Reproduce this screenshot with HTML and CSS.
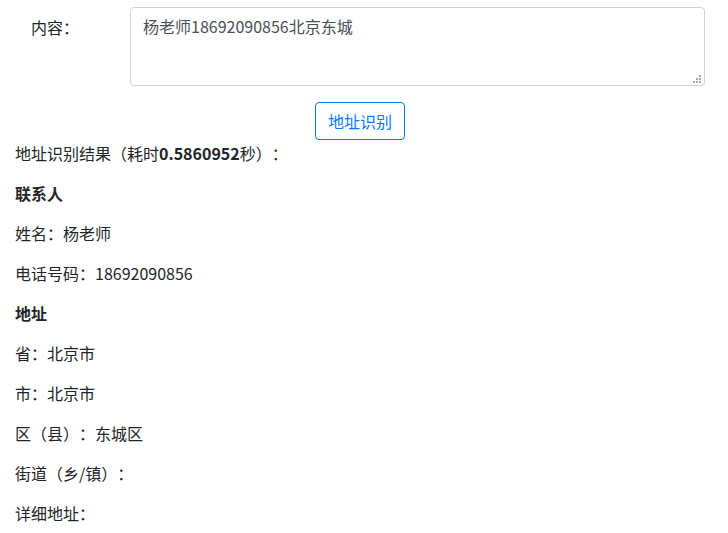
FILE: index.html
```html
<!DOCTYPE html>
<html lang="zh-CN">
<head>
<meta charset="utf-8">
<title>地址识别</title>
<link rel="stylesheet" href="styles.css">
</head>
<body>
<div class="page">
  <div class="form-row">
    <label class="label" for="content">内容：</label>
    <div class="field">
      <textarea id="content" class="input">杨老师18692090856北京东城</textarea>
      <svg class="grip" width="8" height="8" viewBox="0 0 8 8" aria-hidden="true">
        <rect x="6" y="0" width="2" height="2"/>
        <rect x="3" y="3" width="2" height="2"/>
        <rect x="6" y="3" width="2" height="2"/>
        <rect x="0" y="6" width="2" height="2"/>
        <rect x="3" y="6" width="2" height="2"/>
        <rect x="6" y="6" width="2" height="2"/>
      </svg>
    </div>
  </div>
  <div class="actions">
    <button class="btn" type="button">地址识别</button>
  </div>
  <div class="result">
    <p>地址识别结果（耗时<b>0.5860952</b>秒）：</p>
    <p><b>联系人</b></p>
    <p>姓名：杨老师</p>
    <p>电话号码：18692090856</p>
    <p><b>地址</b></p>
    <p>省：北京市</p>
    <p>市：北京市</p>
    <p>区（县）：东城区</p>
    <p>街道（乡/镇）：</p>
    <p>详细地址：</p>
  </div>
</div>
</body>
</html>
```
FILE: styles.css
```css
* { box-sizing: border-box; }
html, body { margin: 0; padding: 0; background: #fff; }
body {
  font-family: "Noto Sans CJK SC", "Noto Sans", sans-serif;
  font-size: 16px;
  line-height: 1.5;
  color: #212529;
  text-spacing-trim: space-all;
}
.page {
  padding: 7px 23px 0 15px;
}
.form-row {
  display: flex;
  align-items: flex-start;
  margin-bottom: 16px;
}
.label {
  width: 115px;
  flex: none;
  padding: 8px 0 0 16px;
  line-height: 24px;
}
.field {
  flex: 1;
  position: relative;
  display: flex;
}
.input {
  flex: 1;
  height: 79px;
  padding: 6px 12px;
  font: inherit;
  line-height: 1.5;
  color: #495057;
  border: 1px solid #ced4da;
  border-radius: 4px;
  background: #fff;
  resize: none;
  outline: none;
  text-spacing-trim: space-all;
}
.grip {
  position: absolute;
  right: 4px;
  bottom: 3px;
  fill: #a9a9a9;
}
.actions {
  display: flex;
  justify-content: center;
  padding-bottom: 1px;
}
.btn {
  font: inherit;
  line-height: 24px;
  padding: 6px 12px;
  color: #007bff;
  background: #fff;
  border: 1px solid #007bff;
  border-radius: 4px;
  cursor: pointer;
}
.result p {
  margin: 0 0 16px;
}
.result b { font-weight: 700; }
```
